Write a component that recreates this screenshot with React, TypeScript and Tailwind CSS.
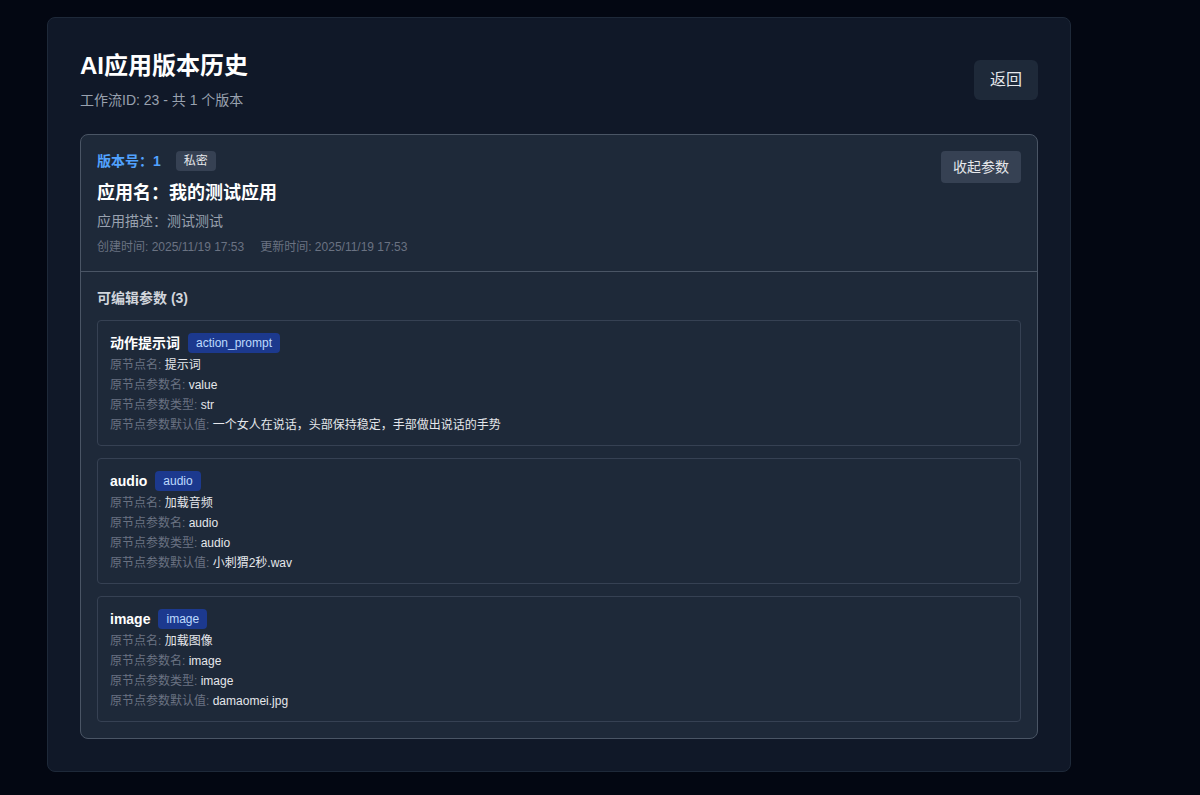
import React from "react";

const params = [
  {
    name: "动作提示词",
    key: "action_prompt",
    nodeName: "提示词",
    paramName: "value",
    paramType: "str",
    defaultValue: "一个女人在说话，头部保持稳定，手部做出说话的手势",
  },
  {
    name: "audio",
    key: "audio",
    nodeName: "加载音频",
    paramName: "audio",
    paramType: "audio",
    defaultValue: "小刺猬2秒.wav",
  },
  {
    name: "image",
    key: "image",
    nodeName: "加载图像",
    paramName: "image",
    paramType: "image",
    defaultValue: "damaomei.jpg",
  },
];

function Row({ label, value }: { label: string; value: string }) {
  return (
    <div className="text-xs leading-4">
      <span className="text-gray-500">{label}: </span>
      <span className="text-gray-200">{value}</span>
    </div>
  );
}

export default function App() {
  return (
    <div
      className="min-h-screen bg-[#030712] pl-[47px] pt-[17px] pb-6"
      style={{ fontFamily: '"Liberation Sans", "Noto Sans CJK SC", sans-serif' }}
    >
      <div className="w-[1024px] rounded-lg border border-gray-800 bg-gray-900 px-8 pt-8 pb-8">
        {/* Header */}
        <div className="mb-6 flex items-center justify-between">
          <div>
            <h1 className="text-2xl font-bold text-white">AI应用版本历史</h1>
            <p className="mt-2 text-sm text-gray-400">工作流ID: 23 - 共 1 个版本</p>
          </div>
          <button className="rounded-md bg-gray-800 px-4 py-2 text-base text-gray-200">
            返回
          </button>
        </div>

        {/* Version card */}
        <div className="rounded-lg border border-gray-600 bg-gray-800">
          <div className="flex items-start justify-between border-b border-gray-600 p-4">
            <div>
              <div className="flex items-center gap-[15px]">
                <span className="text-sm font-semibold text-blue-400">版本号：1</span>
                <span className="rounded bg-gray-700 px-2 py-0.5 text-xs text-gray-200">私密</span>
              </div>
              <h2 className="mt-2 text-lg font-bold text-white">应用名：我的测试应用</h2>
              <p className="mt-1 text-sm text-gray-400">应用描述：测试测试</p>
              <div className="mt-2 flex gap-4 text-xs leading-4 text-gray-500">
                <span>创建时间: 2025/11/19 17:53</span>
                <span>更新时间: 2025/11/19 17:53</span>
              </div>
            </div>
            <button className="rounded bg-gray-700 px-3 py-1.5 text-sm text-gray-200">收起参数</button>
          </div>

          <div className="p-4">
            <h3 className="mb-3 text-sm font-semibold text-gray-300">可编辑参数 (3)</h3>
            <div className="flex flex-col gap-3">
              {params.map((p) => (
                <div key={p.key} className="rounded border border-gray-700 bg-gray-800 p-3">
                  <div className="mb-1 flex h-5 items-center gap-2">
                    <span className="text-sm font-semibold text-white">{p.name}</span>
                    <span className="rounded bg-blue-900 px-2 py-0.5 text-xs text-blue-200">{p.key}</span>
                  </div>
                  <div className="space-y-1">
                    <Row label="原节点名" value={p.nodeName} />
                    <Row label="原节点参数名" value={p.paramName} />
                    <Row label="原节点参数类型" value={p.paramType} />
                    <Row label="原节点参数默认值" value={p.defaultValue} />
                  </div>
                </div>
              ))}
            </div>
          </div>
        </div>
      </div>
    </div>
  );
}
